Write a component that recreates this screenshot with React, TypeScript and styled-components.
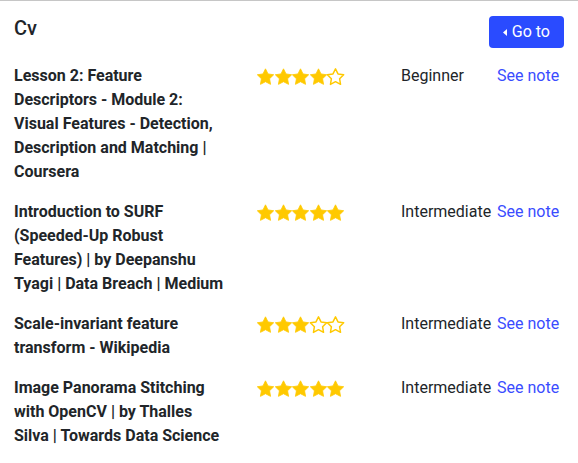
import React from "react";
import styled, { createGlobalStyle } from "styled-components";

const Global = createGlobalStyle`
  html, body { margin: 0; padding: 0; background: #fff; }
  body { font-family: Roboto, "Liberation Sans", Arial, sans-serif; color: #212529; }
`;

const Card = styled.div`
  border-top: 1px solid #c6c6c6;
  padding: 15px 14px 16px 14px;
  background: #fff;
`;

const Header = styled.div`
  display: flex;
  justify-content: space-between;
  align-items: flex-start;
  height: 32px;
`;

const Title = styled.h2`
  margin: 0;
  font-size: 20px;
  font-weight: 500;
  line-height: 24px;
  color: #212529;
`;

const GoButton = styled.button`
  display: inline-flex;
  align-items: center;
  gap: 5px;
  height: 32px;
  padding: 0 14px;
  border: none;
  border-radius: 4px;
  background: #2a4bff;
  color: #fff;
  font-family: inherit;
  font-size: 16px;
  line-height: 24px;
  cursor: pointer;
`;

const Caret = styled.svg`
  width: 4px;
  height: 7px;
  fill: #fff;
`;

const List = styled.div`
  margin-top: 16px;
  display: grid;
  grid-template-columns: 243px 144px 96px auto;
  row-gap: 16px;
  font-size: 16px;
  line-height: 24px;
`;

const NoteTitle = styled.div`
  font-weight: 700;
  padding-right: 32px;
  color: #212529;
`;

const Stars = styled.div`
  display: flex;
  gap: 0.6px;
  height: 24px;
  align-items: center;
`;

const Level = styled.div`
  color: #212529;
  white-space: nowrap;
`;

const NoteLink = styled.a`
  color: #3a4cff;
  text-decoration: none;
  white-space: nowrap;
`;

const StarSvg = styled.svg`
  width: 17px;
  height: 17px;
  display: block;
  overflow: visible;
`;

const STAR = "M12 1.8l3.09 6.26 6.91 1.01-5 4.87 1.18 6.88L12 17.57l-6.18 3.25L7 13.94 2 9.07l6.91-1.01z";

const Star = ({ filled }: { filled: boolean }) => (
  <StarSvg viewBox="1.6 1.2 20.8 20">
    <path
      d={STAR}
      fill={filled ? "#ffc900" : "none"}
      stroke="#ffc900"
      strokeWidth={filled ? 1 : 1.8}
      strokeLinejoin="round"
    />
  </StarSvg>
);

const notes = [
  {
    title:
      "Lesson 2: Feature Descriptors - Module 2: Visual Features - Detection, Description and Matching | Coursera",
    rating: 4,
    level: "Beginner",
  },
  {
    title:
      "Introduction to SURF (Speeded-Up Robust Features) | by Deepanshu Tyagi | Data Breach | Medium",
    rating: 5,
    level: "Intermediate",
  },
  {
    title: "Scale-invariant feature transform - Wikipedia",
    rating: 3,
    level: "Intermediate",
  },
  {
    title:
      "Image Panorama Stitching with OpenCV | by Thalles Silva | Towards Data Science",
    rating: 5,
    level: "Intermediate",
  },
];

export default function App() {
  return (
    <>
      <Global />
      <Card>
        <Header>
          <Title>Cv</Title>
          <GoButton>
            <Caret viewBox="0 0 4 7">
              <path d="M4 0L0 3.5 4 7z" />
            </Caret>
            Go to
          </GoButton>
        </Header>
        <List>
          {notes.map((n, i) => (
            <React.Fragment key={i}>
              <NoteTitle>{n.title}</NoteTitle>
              <Stars>
                {[0, 1, 2, 3, 4].map((s) => (
                  <Star key={s} filled={s < n.rating} />
                ))}
              </Stars>
              <Level>{n.level}</Level>
              <NoteLink href="#">See note</NoteLink>
            </React.Fragment>
          ))}
        </List>
      </Card>
    </>
  );
}
